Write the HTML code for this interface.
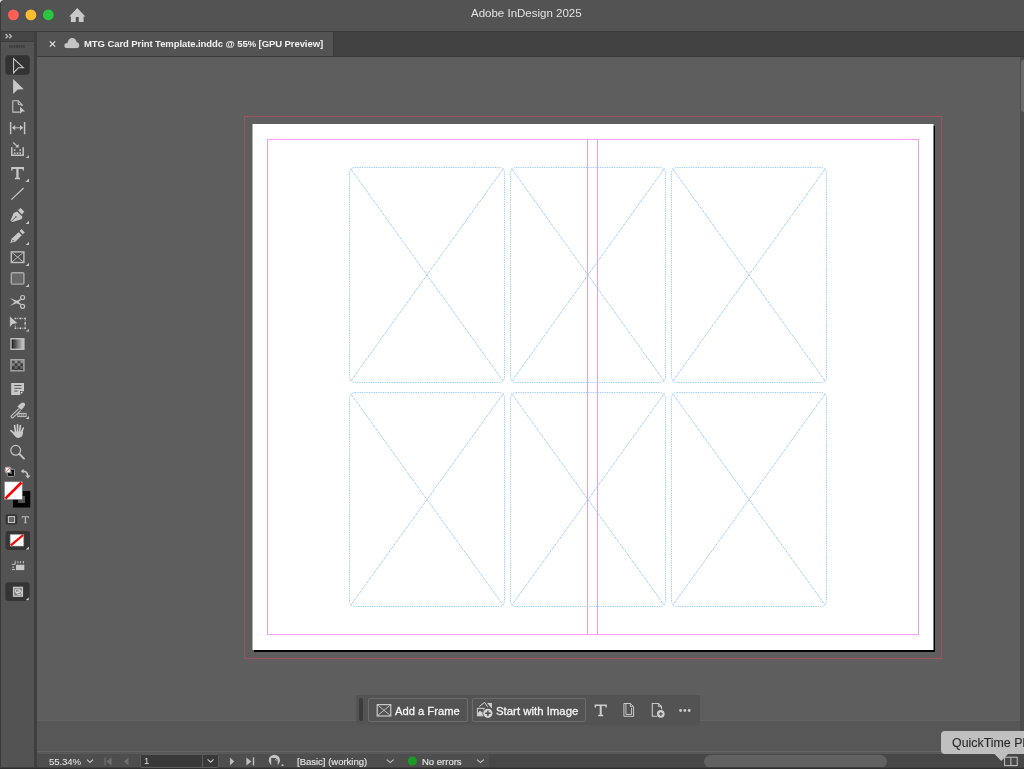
<!DOCTYPE html>
<html><head><meta charset="utf-8">
<style>
*{margin:0;padding:0;box-sizing:border-box}
html,body{width:1024px;height:769px;overflow:hidden;background:#5e5e5e;font-family:"Liberation Sans",sans-serif}
.a{position:absolute}
#title{left:0;top:0;width:1024px;height:31px;background:#535353}
#titleline{left:0;top:31px;width:1024px;height:1px;background:#3a3a3a}
#tabbar{left:37px;top:32px;width:987px;height:24px;background:#424242}
#tab{left:37px;top:32px;width:297px;height:24px;background:#535353;border-right:1px solid #3c3c3c}
#tabline{left:37px;top:56px;width:987px;height:1px;background:#3a3a3a}
#tools{left:0;top:32px;width:34px;height:737px;background:#535353}
#toolshead{left:0;top:32px;width:34px;height:9px;background:#454545}
#sep{left:34px;top:32px;width:3px;height:737px;background:#3f3f3f}
#canvas{left:37px;top:57px;width:983px;height:663px;background:#5e5e5e}
#vscroll{left:1020px;top:57px;width:4px;height:696px;background:#4d4d4d}
#vthumb{left:1021px;top:60px;width:6px;height:52px;background:#6a6a6a;border-radius:3px}
#band{left:37px;top:720px;width:983px;height:31px;background:#575757;border-top:1px solid #626262}
#statusline{left:37px;top:751px;width:987px;height:3px;background:#585858;border-top:1px solid #646464}
#status{left:37px;top:754px;width:452px;height:14px;background:#4e4e4e}
#hscroll{left:489px;top:754px;width:535px;height:14px;background:#474747}
#hthumb{left:704px;top:755px;width:183px;height:13px;background:#616161;border-radius:7px}
#bottomline{left:0;top:767px;width:1024px;height:2px;background:#2f2f2f;border-top:1px solid #3f3f3f}
.t{will-change:transform}
.m{-webkit-text-stroke:0.3px currentColor}
.m2{-webkit-text-stroke:0.15px currentColor}
.txt{color:#dcdcdc;font-size:10px;white-space:nowrap;line-height:12px}
</style></head><body>
<div class="a" id="title"></div>
<div class="a" id="titleline"></div>
<!-- traffic lights -->
<svg class="a" style="left:0;top:0" width="60" height="30"><circle cx="13.4" cy="14.9" r="5.4" fill="#fe5f57"/><circle cx="30.9" cy="14.9" r="5.4" fill="#febc2e"/><circle cx="48.3" cy="14.9" r="5.4" fill="#28c840"/></svg>
<svg class="a" style="left:60px;top:0" width="40" height="30"><path d="M17.2 8 L25.4 16.4 L23.6 16.4 L23.6 22 L18.8 22 L18.8 17 L15.8 17 L15.8 22 L10.9 22 L10.9 16.4 L9.2 16.4 Z" fill="#c8c8c8"/></svg>
<div class="a t" style="left:471px;top:6px;color:#e2e2e2;font-size:11.5px;line-height:14px;white-space:nowrap">Adobe InDesign 2025</div>

<div class="a" id="tabbar"></div>
<div class="a" id="tab"></div>
<svg class="a" style="left:37px;top:32px" width="60" height="24">
 <path d="M12.8 9.3 L18.2 14.7 M18.2 9.3 L12.8 14.7" stroke="#e8e8e8" stroke-width="1.1"/>
 <g fill="#c4c4c4"><circle cx="30" cy="13.5" r="2.6"/><circle cx="35.2" cy="10.6" r="4.5"/><circle cx="39.3" cy="13.2" r="2.9"/><rect x="30" y="12" width="9.3" height="4.1"/></g>
</svg>
<div class="a t" style="left:84px;top:36.5px;color:#f2f2f2;font-size:9.5px;font-weight:bold;letter-spacing:-0.08px;line-height:14px;white-space:nowrap">MTG Card Print Template.inddc @ 55% [GPU Preview]</div>
<div class="a" id="tabline"></div>
<div class="a" id="canvas"></div>
<div class="a" id="tools"></div>
<div class="a" id="toolshead"></div>
<div class="a" id="sep"></div>
<svg class="a" style="left:0;top:0" width="37" height="769">
 <rect x="0" y="0" width="1" height="769" fill="#3a3a3a"/>
 <path d="M0 0 H3 Q0.6 0.6 0 3 Z" fill="#e8e8e8"/>
 <path d="M5.6 34.1 L7.8 36.2 L5.6 38.3 M9.2 34.1 L11.4 36.2 L9.2 38.3" fill="none" stroke="#b4b4b4" stroke-width="1.4"/>
 <rect x="0" y="41" width="34" height="1" fill="#3c3c3c"/>
 <g fill="#3e3e3e"><rect x="9" y="45" width="1.2" height="3"/><rect x="11.4" y="45" width="1.2" height="3"/><rect x="13.8" y="45" width="1.2" height="3"/><rect x="16.2" y="45" width="1.2" height="3"/><rect x="18.6" y="45" width="1.2" height="3"/><rect x="21" y="45" width="1.2" height="3"/><rect x="23.4" y="45" width="1.2" height="3"/><rect x="9" y="45.5" width="16" height="2" fill-opacity=".5"/></g>
 <rect x="5.3" y="55.3" width="24.4" height="19.4" rx="3" fill="#333333"/>
 <g fill="none" stroke="#c4c4c4" stroke-width="1.1" stroke-linejoin="miter">
  <path d="M13.6 58.6 L23.4 67.8 L18.3 67.8 L13.6 72.9 Z"/>
 </g>
 <g fill="#c8c8c8">
  <path d="M13.1 79.1 L23.8 89.3 L17.8 89.5 L13.1 94 Z"/>
 </g>
 <!-- page tool -->
 <g fill="none" stroke="#c4c4c4" stroke-width="1.1">
  <path d="M19.8 112.1 L12.8 112.1 L12.8 100.7 L18.2 100.7 L22.2 104.9 L22.2 106"/>
  <path d="M18.2 100.7 L18.2 103.2 Q18.2 104.7 19.7 104.7 L22.2 104.9" />
 </g>
 <path d="M20.1 106.7 L25.1 111.4 L22.3 111.5 L20.1 114 Z" fill="#c8c8c8"/>
 <!-- gap tool -->
 <g stroke="#c4c4c4" fill="none">
  <path d="M10.6 122 V134.3 M24.6 122 V134.3" stroke-width="1.5"/>
  <path d="M14 127.8 H21.2" stroke-width="1"/>
 </g>
 <path d="M12 127.8 L15.2 125.1 V130.5 Z M23.2 127.8 L20 125.1 V130.5 Z" fill="#c4c4c4"/>
 <!-- content collector -->
 <g fill="none" stroke="#c4c4c4">
  <path d="M11.8 147.2 V155.3 H23.2 V147.2" stroke-width="1.5"/>
  <path d="M13.2 142.5 L17.6 146.6" stroke-width="1.2"/>
 </g>
 <g fill="#c4c4c4">
  <path d="M18.8 147.6 L18.6 143.9 L15.2 147.5 Z"/>
  <rect x="13.9" y="149.3" width="1.6" height="1.6"/><rect x="19.4" y="149.3" width="1.6" height="1.6"/>
  <rect x="13.9" y="152.4" width="1.6" height="1.5"/><rect x="16.7" y="152.4" width="1.6" height="1.5"/><rect x="19.4" y="152.4" width="1.6" height="1.5"/>
 </g>
 <!-- type tool -->
 <g fill="#c6c6c6">
  <path d="M11.2 166.9 H24 V170.6 H22.6 V168.9 H18.6 V177.8 H20 V179.2 H14.9 V177.8 H16.3 V168.9 H12.6 V170.6 H11.2 Z"/>
 </g>
 <!-- line tool -->
 <path d="M11.4 199.6 L23.6 188" stroke="#c4c4c4" stroke-width="1.3" fill="none"/>
 <!-- pen -->
 <g fill="#c8c8c8">
  <path d="M18 210.3 L20.6 207.9 L24.3 211.8 L21.8 214.4 Z"/>
  <path d="M17.1 211.6 L22.6 217.1 L21.2 219.2 L12.6 222 L10.5 220.6 L13.7 213 Z"/>
 </g>
 <path d="M11.8 221 L15.6 217.2" stroke="#555" stroke-width="0.9"/>
 <circle cx="15.9" cy="216.9" r="0.8" fill="#555"/>
 <!-- pencil -->
 <g fill="#c8c8c8">
  <path d="M19.6 231.1 L21.5 229 L24.8 232.4 L22.8 234.2 Z"/>
  <path d="M18.6 232.2 L21.8 235.3 L15.6 241.4 L10.2 242.9 L11.8 238.6 Z"/>
 </g>
 <path d="M12.3 240 L14.3 240.5 L12.6 241.9 Z" fill="#5a5a5a"/>
 <!-- rect frame tool -->
 <rect x="11.3" y="251.9" width="12.6" height="10.6" fill="#4e4e4e" stroke="#bdbdbd" stroke-width="1.4"/>
 <path d="M11.5 252.1 L23.7 262.3 M23.7 252.1 L11.5 262.3" stroke="#bdbdbd" stroke-width="0.9"/>
 <!-- rectangle tool -->
 <rect x="11.3" y="272.7" width="12.6" height="11.4" rx="1" fill="#686868" stroke="#a8a8a8" stroke-width="1.4"/>
 <!-- scissors -->
 <g fill="none" stroke="#c4c4c4" stroke-width="1.2">
  <circle cx="22.6" cy="297.5" r="2"/>
  <circle cx="22.6" cy="306.3" r="2"/>
 </g>
 <g fill="#c8c8c8">
  <path d="M9.8 298.1 L17.2 301 L21.1 304 L20.5 305.1 L16.1 302.9 Z"/>
  <path d="M9.8 305.9 L17.2 303 L21.1 300 L20.5 298.9 L16.1 301.1 Z"/>
 </g>
 <!-- free transform -->
 <g fill="none" stroke="#bdbdbd" stroke-width=".9" stroke-dasharray="1 .7">
  <path d="M15.3 318.4 H25.2 V328.2 H15.3 V324.6"/>
 </g>
 <g fill="#c8c8c8">
  <rect x="14.6" y="317.7" width="1.6" height="1.6"/><rect x="19.6" y="317.7" width="1.6" height="1.6"/><rect x="24.4" y="317.7" width="1.6" height="1.6"/>
  <rect x="24.4" y="322.6" width="1.6" height="1.6"/>
  <rect x="14.6" y="327.5" width="1.6" height="1.6"/><rect x="19.6" y="327.5" width="1.6" height="1.6"/><rect x="24.4" y="327.5" width="1.6" height="1.6"/>
 </g>
 <path d="M9.7 316 L17.9 323.3 L12.6 324.3 L9.7 327.4 Z" fill="#c8c8c8" stroke="#535353" stroke-width=".6"/>
 <!-- gradient swatch -->
 <defs>
  <linearGradient id="gr" x1="0" x2="1" y1="0" y2="0"><stop offset="0" stop-color="#151515"/><stop offset="1" stop-color="#d4d4d4"/></linearGradient>
  <linearGradient id="gf" x1="0" x2="0" y1="0" y2="1"><stop offset="0" stop-color="#9a9a9a"/><stop offset="1" stop-color="#2a2a2a"/></linearGradient>
  <pattern id="chk" x="11.7" y="360.4" width="5.8" height="5.8" patternUnits="userSpaceOnUse"><rect width="2.9" height="2.9" fill="#000" fill-opacity=".5"/><rect x="2.9" y="2.9" width="2.9" height="2.9" fill="#000" fill-opacity=".5"/></pattern>
 </defs>
 <rect x="11" y="338.7" width="12.9" height="10.6" fill="url(#gr)" stroke="#bdbdbd" stroke-width="1.4"/>
 <rect x="11" y="359.7" width="12.9" height="11.1" fill="#a0a0a0" stroke="#aaaaaa" stroke-width="1.4"/>
 <rect x="11.7" y="360.4" width="11.5" height="9.7" fill="url(#gf)" fill-opacity=".6"/>
 <rect x="11.7" y="360.4" width="11.5" height="9.7" fill="url(#chk)"/>
 <!-- note tool -->
 <path d="M11.2 382.9 H24 V391 L20 394.9 H11.2 Z" fill="#c8c8c8"/>
 <g stroke="#4a4a4a" stroke-width="0.9"><path d="M14.2 385.5 H21.5 M14.2 388.3 H21.5 M14.2 391 H17.6"/></g>
 <path d="M24 391 L20 394.9 L20 391.2 Q20 391 20.3 391 Z" fill="#555"/>
 <path d="M23.2 391.8 L20.8 394.1 L20.8 391.8 Z" fill="#e0e0e0"/>
 <!-- eyedropper -->
 <g fill="#c8c8c8">
  <circle cx="22.9" cy="404.6" r="2.2"/>
  <path d="M17.5 406.5 L20.4 403.6 L24 407.2 L21.1 410.1 Z"/>
 </g>
 <path d="M18.8 408.6 L11.6 415.6 Q10.6 416.8 11.6 417.6 Q12.4 418.4 13.4 417.4 L20.6 410.4" fill="none" stroke="#c4c4c4" stroke-width="1.1"/>
 <rect x="17.8" y="413.4" width="8.3" height="3.2" fill="none" stroke="#c4c4c4" stroke-width="1"/>
 <g fill="#c4c4c4"><rect x="19.3" y="414.2" width="1" height="1.6"/><rect x="21.3" y="414.2" width="1" height="1.6"/><rect x="23.3" y="414.2" width="1" height="1.6"/></g>
 <!-- hand -->
 <g fill="#c8c8c8" stroke="#c8c8c8" stroke-linecap="round">
  <path d="M15.6 432.5 L14.6 425.6 M17.6 432.5 L17.5 424.8 M19.6 432.5 L20.3 425.5 M21.4 433 L23.1 428.1" stroke-width="1.7" fill="none"/>
  <path d="M11 430.7 L14.8 434.2" stroke-width="1.8" fill="none"/>
  <path d="M14.4 431.5 H22.8 L22.9 433.5 Q22.4 437.9 18.2 437.9 Q16.2 437.9 14.9 436.2 L13.6 434.2 Z" stroke="none"/>
 </g>
 <!-- zoom -->
 <circle cx="15.7" cy="450.3" r="4.9" fill="none" stroke="#c4c4c4" stroke-width="1.2"/>
 <path d="M19.4 454 L24 458.6" stroke="#c4c4c4" stroke-width="1.9" stroke-linecap="round"/>
 <!-- default fill/stroke -->
 <rect x="7.3" y="469.2" width="7.2" height="7.2" rx="1" fill="#0d0d0d" stroke="#a0a0a0" stroke-width="1"/>
 <rect x="9.6" y="471.5" width="2.6" height="2.6" fill="#555" />
 <rect x="5.2" y="467.2" width="5.4" height="5.4" rx="1" fill="#f2f2f2" stroke="#a0a0a0" stroke-width="1"/>
 <path d="M5.9 471.9 L9.9 467.9" stroke="#ff3a3a" stroke-width=".8"/>
 <!-- swap -->
 <path d="M22.6 471.2 Q27.4 471 27.8 476" fill="none" stroke="#c4c4c4" stroke-width="1.5"/>
 <path d="M20.8 471.2 L23.6 468.8 L23.6 473.6 Z M27.9 478.4 L25.3 475.4 L30.5 475.4 Z" fill="#c4c4c4"/>
 <!-- stroke swatch -->
 <rect x="13" y="491" width="17.3" height="16.5" fill="#000"/>
 <rect x="17.9" y="496" width="7.2" height="7" fill="#555"/>
 <!-- fill swatch -->
 <rect x="4.6" y="481.8" width="17.6" height="17.6" fill="#fff" stroke="#8a8a8a" stroke-width=".6"/>
 <path d="M5.3 498.7 L21.5 482.5" stroke="#ff0000" stroke-width="2.6"/>
 <!-- container/text buttons -->
 <rect x="5.6" y="514.2" width="11.7" height="10.4" rx="2.2" fill="#353535"/>
 <rect x="8.4" y="516.6" width="6.2" height="5.9" fill="#666" stroke="#c8c8c8" stroke-width="1"/>
 <path d="M21.8 516.2 H29 V518.3 H28.3 V517.2 H26 V522.4 H26.9 V523.3 H23.9 V522.4 H24.8 V517.2 H22.5 V518.3 H21.8 Z" fill="#bbbbbb"/>
 <!-- apply none -->
 <rect x="5.6" y="531.1" width="24.4" height="18.9" rx="3" fill="#353535"/>
 <rect x="10.1" y="534.3" width="13.7" height="11.8" fill="#fff" stroke="#8a8a8a" stroke-width=".6"/>
 <path d="M10.8 545.4 L23.2 535" stroke="#ff0000" stroke-width="2.2"/>
 <!-- change layout -->
 <rect x="16" y="564.8" width="8.3" height="5.3" fill="#c8c8c8"/>
 <g stroke="#c0c0c0" stroke-width="1" fill="none">
  <path d="M15.2 560.8 V564.3 H11.8"/>
  <path d="M17.9 561 V563.3 M20.6 561 V563.3 M23.4 561 V563.3"/>
  <path d="M12 569.6 H15"/>
 </g>
 <rect x="12.3" y="566.4" width="1.8" height="1.8" fill="#9a9a9a"/>
 <!-- screen mode -->
 <rect x="5.4" y="582.2" width="24.1" height="18.8" rx="3" fill="#353535"/>
 <rect x="13.6" y="587.4" width="8.8" height="8.8" fill="#777" stroke="#c4c4c4" stroke-width="1.4"/>
 <rect x="15.4" y="589.2" width="4.6" height="3.4" rx=".8" fill="none" stroke="#e0e0e0" stroke-width="1"/>
 <rect x="17" y="591" width="4.4" height="3.4" rx=".8" fill="none" stroke="#e0e0e0" stroke-width="1"/>
 <!-- corner triangles -->
 <g fill="#c8c8c8">
  <path d="M28.9 155.2 V158.1 H25.7 Z"/>
  <path d="M29 178.4 V182 H25.4 Z"/>
  <path d="M29 220.8 V224 H25.6 Z"/>
  <path d="M29 241.9 V245 H25.6 Z"/>
  <path d="M29 263 V266 H25.6 Z"/>
  <path d="M29 284.1 V287 H25.6 Z"/>
  <path d="M29 329 V331.6 H25.8 Z"/>
  <path d="M29 415.9 V419 H25.8 Z"/>
  <path d="M29 546.5 V549.6 H25.6 Z"/>
  <path d="M28.8 597.3 V600.3 H25.6 Z"/>
 </g>
</svg>

<div class="a" id="vscroll"></div>
<div class="a" id="vthumb"></div>
<div class="a" id="band"></div>
<div class="a" id="statusline"></div>
<div class="a" id="status"></div>
<div class="a" id="hscroll"></div>
<div class="a" id="hthumb"></div>
<div class="a" id="bottomline"></div>

<!-- page -->
<svg class="a" style="left:0;top:0" width="1024" height="769">
  <rect x="244.5" y="116.5" width="697" height="542" fill="none" stroke="#a0505e" stroke-width="1"/>
  <rect x="254" y="126" width="681" height="526" fill="#000"/>
  <rect x="252.5" y="124" width="681" height="526" fill="#fff"/>
  <g fill="none" stroke="#90c6f8" stroke-width="1" stroke-dasharray="0.875 0.875">
<rect x="349.5" y="167.5" width="155.0" height="215.0" rx="5.5"/>
<path d="M350.66 168.66 L503.34 381.34 M503.34 168.66 L350.66 381.34" stroke="#7cb6f4"/>
<rect x="510.5" y="167.5" width="155.0" height="215.0" rx="5.5"/>
<path d="M511.66 168.66 L664.34 381.34 M664.34 168.66 L511.66 381.34" stroke="#7cb6f4"/>
<rect x="671.5" y="167.5" width="155.0" height="215.0" rx="5.5"/>
<path d="M672.66 168.66 L825.34 381.34 M825.34 168.66 L672.66 381.34" stroke="#7cb6f4"/>
<rect x="349.5" y="392.5" width="155.0" height="214.0" rx="5.5"/>
<path d="M350.66 393.66 L503.34 605.34 M503.34 393.66 L350.66 605.34" stroke="#7cb6f4"/>
<rect x="510.5" y="392.5" width="155.0" height="214.0" rx="5.5"/>
<path d="M511.66 393.66 L664.34 605.34 M664.34 393.66 L511.66 605.34" stroke="#7cb6f4"/>
<rect x="671.5" y="392.5" width="155.0" height="214.0" rx="5.5"/>
<path d="M672.66 393.66 L825.34 605.34 M825.34 393.66 L672.66 605.34" stroke="#7cb6f4"/>
  </g>
  <path d="M267 139.5 H919 M267 634.5 H919" stroke="#ff9cff" stroke-width="1"/>
  <path d="M267.5 139 V635 M918.5 139 V635" stroke="#dca4ff" stroke-width="1"/>
  <line x1="587.5" y1="139.5" x2="587.5" y2="634.5" stroke="#d9a3ff"/>
  <line x1="597.5" y1="139.5" x2="597.5" y2="634.5" stroke="#d9a3ff"/>
</svg>
<!-- floating bar -->
<div class="a" style="left:356px;top:695px;width:344px;height:30px;background:#535353;border-radius:2px"></div>
<div class="a" style="left:359px;top:698px;width:4px;height:23px;background:#3b3b3b;border-radius:2px"></div>
<div class="a" style="left:368px;top:698px;width:100px;height:24px;border:1px solid #6b6b6b;border-radius:2px"></div>
<div class="a" style="left:472px;top:698px;width:114px;height:24px;border:1px solid #6b6b6b;border-radius:2px"></div>
<div class="a t m" style="left:395px;top:703.5px;color:#f4f4f4;font-size:11.2px;line-height:14px;white-space:nowrap">Add a Frame</div>
<div class="a t m" style="left:496px;top:703.5px;color:#f4f4f4;font-size:11.4px;line-height:14px;white-space:nowrap">Start with Image</div>
<svg class="a" style="left:356px;top:695px" width="344" height="30">
 <g fill="none" stroke="#c8c8c8">
  <rect x="21.2" y="9.6" width="13.6" height="11.4" stroke-width="1.2"/>
  <path d="M21.4 9.8 L34.6 20.8 M34.6 9.8 L21.4 20.8" stroke-width=".9"/>
 </g>
 <!-- start with image icon -->
 <path d="M123.2 11.6 L128.6 7.4 L131.6 11.8" fill="none" stroke="#d0d0d0" stroke-width="1"/>
 <path d="M131.2 8 L135.9 8 L135.9 13.8 Z" fill="#d0d0d0"/>
 <rect x="121.4" y="13.4" width="6.6" height="7.4" fill="none" stroke="#d0d0d0" stroke-width="1"/>
 <path d="M121.6 20.8 V18.2 L124 15.4 L126 17.4 L127.8 16 V20.8 Z" fill="#d0d0d0"/>
 <circle cx="131.9" cy="18.3" r="5.4" fill="#535353"/>
 <circle cx="131.9" cy="18.3" r="4.6" fill="#d4d4d4"/>
 <path d="M131.9 15.6 V21 M129.2 18.3 H134.6" stroke="#4a4a4a" stroke-width="1.4"/>
 <!-- T -->
 <path d="M238.6 9.5 H250.8 V12.6 H249.4 V11.1 H245.7 V19.8 H247.2 V21.2 H242.2 V19.8 H243.7 V11.1 H240 V12.6 H238.6 Z" fill="#cfcfcf"/>
 <!-- pages icon -->
 <g fill="none" stroke="#c8c8c8" stroke-width="1">
  <path d="M267.9 8.5 H274.4 L277.6 11.7 V21.3 H267.9 Z"/>
  <path d="M269.9 8.8 V19.4 H275.6 V12.8"/>
  <path d="M274.4 8.5 V11.7 H277.6" stroke-width=".9"/>
 </g>
 <!-- page + icon -->
 <g fill="none" stroke="#c8c8c8" stroke-width="1.1">
  <path d="M301.5 21.3 H296.3 V8.5 H302.4 L305.5 11.6 V14.6"/>
  <path d="M302.4 8.5 V11.6 H305.5" stroke-width=".9"/>
 </g>
 <circle cx="304.8" cy="18.9" r="4.5" fill="#535353"/>
 <circle cx="304.8" cy="18.9" r="3.8" fill="#d0d0d0"/>
 <path d="M304.8 16.9 V20.9 M302.8 18.9 H306.8" stroke="#555" stroke-width="1.2"/>
 <g fill="#cccccc"><circle cx="324.6" cy="15.5" r="1.4"/><circle cx="328.9" cy="15.5" r="1.4"/><circle cx="333.2" cy="15.5" r="1.4"/></g>
</svg>
<!-- status bar content -->
<div class="a t" style="left:49px;top:755.5px;color:#ececec;font-size:9.6px;letter-spacing:-0.1px;line-height:12px;white-space:nowrap">55.34%</div>
<div class="a" style="left:140px;top:754px;width:79px;height:14px;background:#393939;border:1px solid #5c5c5c;border-radius:2px"></div>
<div class="a" style="left:202px;top:755px;width:1px;height:12px;background:#5c5c5c"></div>
<div class="a t" style="left:144px;top:755px;color:#dcdcdc;font-size:9.5px;line-height:12px;white-space:nowrap">1</div>
<div class="a t m2" style="left:297px;top:755.5px;color:#e2e2e2;font-size:9.5px;line-height:12px;white-space:nowrap">[Basic] (working)</div>
<div class="a t m2" style="left:422px;top:755.5px;color:#e2e2e2;font-size:9.5px;line-height:12px;white-space:nowrap">No errors</div>
<svg class="a" style="left:0;top:745px" width="1024" height="24">
 <g fill="none" stroke="#c8c8c8" stroke-width="1.1">
  <path d="M87 14.6 L90 17.4 L93 14.6"/>
  <path d="M207.6 14.4 L210.6 17.2 L213.6 14.4"/>
  <path d="M386.8 14.6 L390.2 17.6 L393.6 14.6"/>
  <path d="M477 14.6 L480.4 17.6 L483.8 14.6"/>
 </g>
 <g fill="#6f6f6f">
  <rect x="104.4" y="12.4" width="1.2" height="8"/>
  <path d="M111.6 12.4 V20.4 L106.4 16.4 Z"/>
  <path d="M128.4 12.6 V20.2 L124 16.4 Z"/>
 </g>
 <g fill="#bdbdbd">
  <path d="M230 12.4 V20.4 L234.2 16.4 Z"/>
  <path d="M246.4 12.4 V20.4 L251.4 16.4 Z"/>
  <rect x="252.8" y="12.4" width="1.4" height="8"/>
 </g>
 <circle cx="274.4" cy="15.3" r="5.6" fill="#c4c4c4"/>
 <path d="M271.2 13 H275.6 L277.7 15.1 V22 H271.2 Z" fill="#4e4e4e"/>
 <path d="M275.4 13.4 L277.4 15.4 L275.4 15.4 Z" fill="#bdbdbd"/>
 <rect x="281.6" y="19.4" width="1.8" height="1.6" fill="#c4c4c4"/>
 <circle cx="412.4" cy="16" r="4.6" fill="#1b9b22"/>
 <!-- split icon -->
 <rect x="1004.6" y="12.2" width="12.6" height="8.4" fill="none" stroke="#c4c4c4" stroke-width="1"/>
 <path d="M1010.9 12.2 V20.6" stroke="#c4c4c4" stroke-width="1"/>
</svg>
<!-- tooltip -->
<svg class="a" style="left:930px;top:725px" width="94" height="44">
 <path d="M15 6 H100 V29 H78 L71.3 36 L64.5 29 H15 Q11 29 11 25 V10 Q11 6 15 6 Z" fill="#c0c0c0"/>
</svg>
<div class="a t m2" style="left:952px;top:736px;color:#2b2b2b;font-size:12.4px;line-height:14px;white-space:nowrap">QuickTime Player</div>

</body></html>
